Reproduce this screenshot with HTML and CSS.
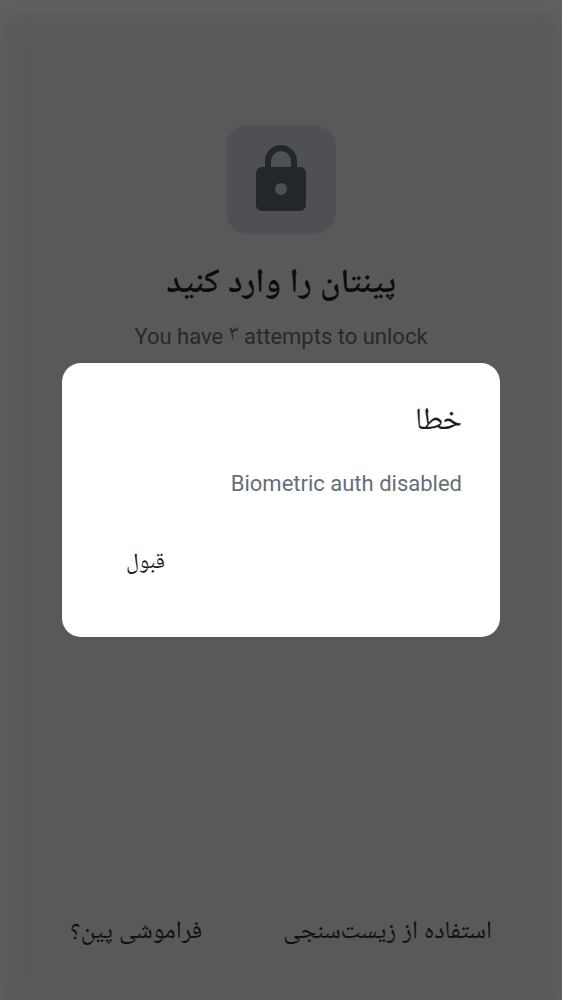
FILE: index.html
```html
<!DOCTYPE html>
<html lang="fa" dir="rtl">
<head>
<meta charset="utf-8">
<meta name="viewport" content="width=device-width, initial-scale=1">
<title>ورود پین</title>
<link rel="stylesheet" href="styles.css">
</head>
<body>
<main class="screen">
  <header class="intro">
    <div class="badge">
      <svg class="lock" viewBox="0 0 50 70" aria-hidden="true">
        <path class="shackle" d="M12 24V16a13 13 0 0 1 26 0v8"/>
        <path class="lock-body" fill-rule="evenodd" d="M6 22H44a6 6 0 0 1 6 6V60a6 6 0 0 1-6 6H6a6 6 0 0 1-6-6V28a6 6 0 0 1 6-6ZM25 38a6 6 0 1 0 0 12a6 6 0 0 0 0-12Z"/>
      </svg>
    </div>
    <h1 class="title">پینتان را وارد کنید</h1>
    <p class="attempts" dir="ltr">You have <span class="count">۳</span> attempts to unlock</p>
  </header>
  <footer class="actions">
    <button class="action" type="button">استفاده از زیست‌سنجی</button>
    <button class="action" type="button">فراموشی پین؟</button>
  </footer>
</main>
<div class="scrim">
  <section class="dialog" role="alertdialog" aria-modal="true" aria-labelledby="dialog-title" aria-describedby="dialog-text">
    <h2 class="dialog-title" id="dialog-title">خطا</h2>
    <p class="dialog-text" id="dialog-text">Biometric auth disabled</p>
    <div class="dialog-actions"><button class="confirm" type="button">قبول</button></div>
  </section>
</div>
</body>
</html>
```
FILE: styles.css
```css
* { box-sizing: border-box; }
body { margin: 0; font-family: Roboto, "Noto Naskh Arabic", "DejaVu Sans", sans-serif; }
h1, h2, p { margin: 0; font-weight: 400; }
button { border: 0; background: none; padding: 0; font: inherit; color: inherit; }
.screen { min-height: 100vh; display: flex; flex-direction: column; justify-content: space-between; padding: 125px 70px 50px; background: #595959; box-shadow: inset 0 12px 24px #626262; color: #101112; }
.intro { display: flex; flex-direction: column; align-items: center; }
.badge { display: grid; place-items: center; width: 110px; height: 109px; border-radius: 22px; background: #4f5055; }
.lock { width: 50px; height: 70px; }
.shackle { fill: none; stroke: #22272a; stroke-width: 6; }
.lock-body { fill: #22272a; }
.title { margin-top: 22px; font-size: 34px; line-height: 48px; font-weight: 600; color: #0b0c0d; }
.attempts { margin-top: 18px; font-size: 22px; line-height: 28px; color: #26292c; }
.count { line-height: 1; vertical-align: 4px; }
.actions { display: flex; justify-content: space-between; font-size: 25px; line-height: 40px; }
.scrim { position: absolute; inset: 0; display: grid; place-items: center; padding: 0 62px; }
.dialog { width: 100%; padding: 34px 38px 56px; border-radius: 19px; background: #fff; color: #1b1c1f; }
.dialog-title { font-size: 31px; line-height: 44px; }
.dialog-text { margin-top: 29px; font-size: 22px; line-height: 28px; color: #666e79; }
.dialog-actions { display: flex; justify-content: flex-end; margin-top: 43px; padding-left: 26px; }
.confirm { font-size: 22px; line-height: 40px; }
```
